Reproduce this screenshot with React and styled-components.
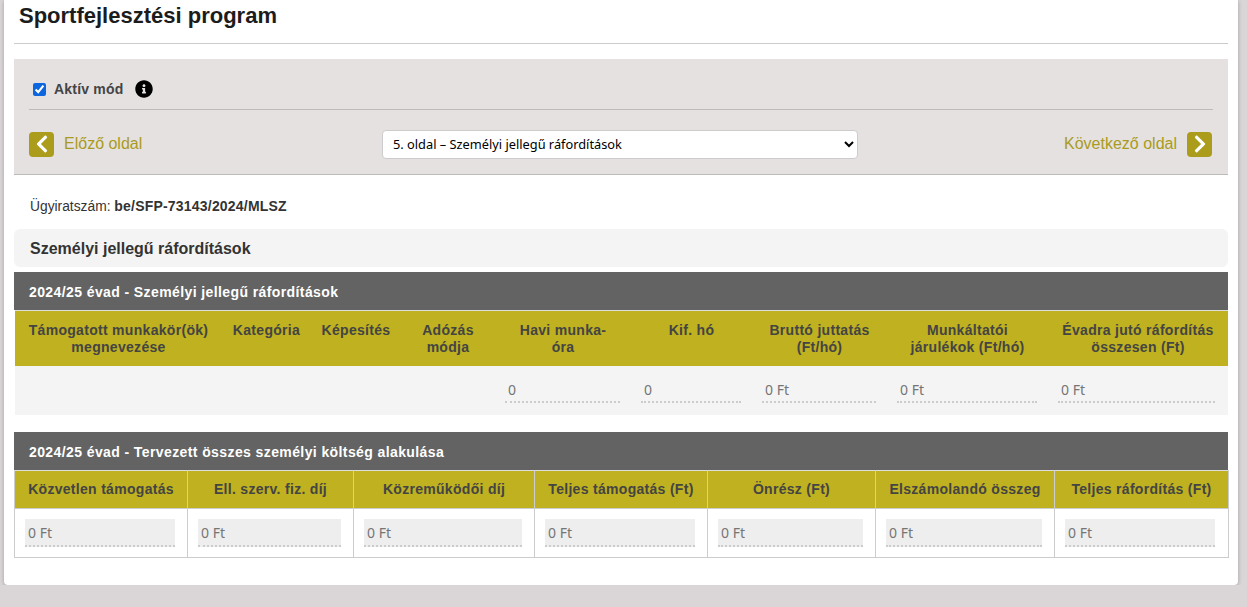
import React from "react";
import styled, { createGlobalStyle } from "styled-components";
import { FaChevronLeft, FaChevronRight, FaInfoCircle } from "react-icons/fa";

const GlobalStyle = createGlobalStyle`
  html, body {
    margin: 0;
    padding: 0;
    background: #dad6d7;
    font-family: "Liberation Sans", Arial, sans-serif;
  }
`;

const Card = styled.main`
  box-sizing: border-box;
  width: 1234px;
  height: 585px;
  margin-left: 4px;
  padding: 0 10px;
  background: #fff;
  border-radius: 0 0 4px 4px;
  box-shadow: 0 1px 4px rgba(0, 0, 0, 0.25);
`;

const Title = styled.h1`
  box-sizing: border-box;
  height: 44px;
  margin: 0;
  padding: 1px 0 0 5px;
  border-bottom: 1px solid #ccc;
  font-size: 22px;
  line-height: 29px;
  color: #1c1c1c;
`;

const Panel = styled.section`
  box-sizing: border-box;
  height: 116px;
  margin-top: 15px;
  padding: 0 15px;
  background: #e5e1e1;
  border-bottom: 1px solid #bdbaba;
`;

const ModeRow = styled.div`
  box-sizing: border-box;
  display: flex;
  align-items: center;
  height: 51px;
  padding-top: 10px;
  border-bottom: 1px solid #bdbaba;
`;

const Check = styled.input`
  width: 13px;
  height: 13px;
  margin: 0 8px 0 4px;
  accent-color: #0b66e0;
`;

const ModeLabel = styled.label`
  font-size: 14px;
  font-weight: 700;
  letter-spacing: 0.2px;
  color: #444;
`;

const InfoIcon = styled(FaInfoCircle)`
  width: 18px;
  height: 18px;
  margin-left: 12px;
  color: #000;
`;

const NavRow = styled.div`
  box-sizing: border-box;
  display: grid;
  grid-template-columns: 353px 476px 1fr;
  align-items: center;
  height: 64px;
  padding: 4px 1px 0 0;
`;

const NavLink = styled.a`
  display: flex;
  align-items: center;
  justify-content: ${(p) => (p.$next ? "flex-end" : "flex-start")};
  gap: 10px;
  font-size: 16px;
  color: #a99b20;
  text-decoration: none;
`;

const NavIcon = styled.span`
  display: flex;
  align-items: center;
  justify-content: center;
  width: 25px;
  height: 25px;
  border-radius: 4px;
  background: #ab9c1b;
  color: #fff;
  font-size: 20px;
`;

const PageSelect = styled.select`
  width: 100%;
  height: 29px;
  padding: 0 6px;
  border: 1px solid #ccc;
  border-radius: 4px;
  background: #fff;
  font-family: "Noto Sans", sans-serif;
  font-size: 12.8px;
  color: #000;
`;

const FileNo = styled.p`
  margin: 23px 0 0;
  padding-left: 16px;
  font-size: 13.8px;
  line-height: 17px;
  color: #333;

  b {
    font-size: 14px;
    letter-spacing: 0.2px;
  }
`;

const SectionTitle = styled.h2`
  box-sizing: border-box;
  height: 38px;
  margin: 14px 0 5px;
  padding-left: 16px;
  border-radius: 6px;
  background: #f4f4f4;
  font-size: 16px;
  line-height: 40px;
  color: #333;
`;

const TableHead = styled.h3`
  box-sizing: border-box;
  height: 38px;
  margin: ${(p) => (p.$gap ? "17px 0 0" : "0")};
  padding-left: 15px;
  background: #636363;
  font-size: 14px;
  letter-spacing: 0.4px;
  line-height: 40px;
  color: #fff;
`;

const Table = styled.table`
  box-sizing: border-box;
  width: ${(p) => (p.$bordered ? "1214px" : "1213px")};
  margin-left: ${(p) => (p.$bordered ? "0" : "1px")};
  table-layout: fixed;
  border-collapse: collapse;
`;

const Th = styled.th`
  box-sizing: border-box;
  width: ${(p) => p.$w}px;
  height: ${(p) => (p.$bordered ? "38px" : "55px")};
  padding: ${(p) => (p.$bordered ? "0" : "11px 10px 0")};
  vertical-align: ${(p) => (p.$bordered ? "middle" : "top")};
  border: ${(p) => (p.$bordered ? "1px solid #ccc" : "0")};
  border-top: 1px solid #ddd;
  background: #bfb11f;
  font-size: 14px;
  line-height: 17px;
  letter-spacing: 0.3px;
  text-align: center;
  white-space: pre-line;
  color: #444;
`;

const Td = styled.td`
  box-sizing: border-box;
  height: 49px;
  padding: ${(p) => (p.$bordered ? "0 12px 0 10px" : "0 11px 0 10px")};
  border: ${(p) => (p.$bordered ? "1px solid #ccc" : "0")};
  background: ${(p) => (p.$bordered ? "#fff" : "#f4f4f4")};

  &:last-child {
    padding-right: 13px;
  }
`;

const Amount = styled.input`
  display: block;
  box-sizing: border-box;
  width: 100%;
  height: ${(p) => (p.$filled ? "28px" : "24px")};
  margin-top: ${(p) => (p.$filled ? "0" : "1px")};
  padding: ${(p) => (p.$filled ? "2px 3px 0" : "0 3px")};
  border: 0;
  border-bottom: 2px dotted #ccc;
  background: ${(p) => (p.$filled ? "#eee" : "transparent")};
  font-family: "Noto Sans", sans-serif;
  font-size: 14px;
  color: #757575;
  outline: none;
`;

const costColumns = [
  { label: "Támogatott munkakör(ök) megnevezése", w: 207 },
  { label: "Kategória", w: 89 },
  { label: "Képesítés", w: 90 },
  { label: "Adózás módja", w: 94 },
  { label: "Havi munka-\nóra", w: 136, value: "0" },
  { label: "Kif. hó", w: 121, value: "0" },
  { label: "Bruttó juttatás (Ft/hó)", w: 135, value: "0 Ft" },
  { label: "Munkáltatói járulékok (Ft/hó)", w: 161, value: "0 Ft" },
  { label: "Évadra jutó ráfordítás összesen (Ft)", w: 180, value: "0 Ft" },
];

const totalColumns = [
  { label: "Közvetlen támogatás", w: 173 },
  { label: "Ell. szerv. fiz. díj", w: 166 },
  { label: "Közreműködői díj", w: 181 },
  { label: "Teljes támogatás (Ft)", w: 173 },
  { label: "Önrész (Ft)", w: 168 },
  { label: "Elszámolandó összeg", w: 179 },
  { label: "Teljes ráfordítás (Ft)", w: 174 },
];

export default function App() {
  return (
    <>
      <GlobalStyle />
      <Card>
        <Title>Sportfejlesztési program</Title>
        <Panel>
          <ModeRow>
            <Check type="checkbox" defaultChecked id="active-mode" />
            <ModeLabel htmlFor="active-mode">Aktív mód</ModeLabel>
            <InfoIcon />
          </ModeRow>
          <NavRow>
            <NavLink href="#prev">
              <NavIcon>
                <FaChevronLeft />
              </NavIcon>
              Előző oldal
            </NavLink>
            <PageSelect defaultValue="5">
              <option value="5">5. oldal – Személyi jellegű ráfordítások</option>
            </PageSelect>
            <NavLink href="#next" $next>
              Következő oldal
              <NavIcon>
                <FaChevronRight />
              </NavIcon>
            </NavLink>
          </NavRow>
        </Panel>
        <FileNo>
          Ügyiratszám: <b>be/SFP-73143/2024/MLSZ</b>
        </FileNo>
        <SectionTitle>Személyi jellegű ráfordítások</SectionTitle>
        <TableHead>2024/25 évad - Személyi jellegű ráfordítások</TableHead>
        <Table>
          <thead>
            <tr>
              {costColumns.map((c) => (
                <Th key={c.label} $w={c.w}>
                  {c.label}
                </Th>
              ))}
            </tr>
          </thead>
          <tbody>
            <tr>
              {costColumns.map((c) => (
                <Td key={c.label}>
                  {c.value && <Amount readOnly value={c.value} />}
                </Td>
              ))}
            </tr>
          </tbody>
        </Table>
        <TableHead $gap>2024/25 évad - Tervezett összes személyi költség alakulása</TableHead>
        <Table $bordered>
          <thead>
            <tr>
              {totalColumns.map((c) => (
                <Th key={c.label} $w={c.w} $bordered>
                  {c.label}
                </Th>
              ))}
            </tr>
          </thead>
          <tbody>
            <tr>
              {totalColumns.map((c) => (
                <Td key={c.label} $bordered>
                  <Amount readOnly $filled value="0 Ft" />
                </Td>
              ))}
            </tr>
          </tbody>
        </Table>
      </Card>
    </>
  );
}
